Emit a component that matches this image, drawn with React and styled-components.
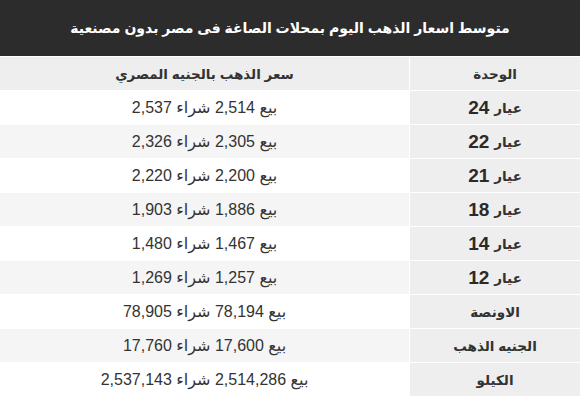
import React from "react";
import styled, { createGlobalStyle } from "styled-components";

const Global = createGlobalStyle`
  html, body { margin: 0; padding: 0; background: #ffffff; }
  body { font-family: "Liberation Sans", Arial, "DejaVu Sans", sans-serif; }
`;

const Page = styled.div`
  width: 580px;
  direction: rtl;
`;

const TitleBar = styled.div`
  height: 56px;
  background: #2c2c2c;
  color: #ffffff;
  display: flex;
  align-items: center;
  justify-content: center;
  font-weight: bold;
  font-size: 14px;
  border-bottom: 1px solid #ffffff;
`;

const Grid = styled.div`
  display: grid;
  grid-template-columns: 170px 1fr;
  grid-auto-rows: 33px;
  gap: 1px;
  background: #ffffff;
`;

const Cell = styled.div`
  display: flex;
  align-items: center;
  justify-content: center;
  color: #333333;
  background: ${(p) => p.$bg};
  font-size: ${(p) => (p.$bold ? "13.5px" : "16px")};
  font-weight: ${(p) => (p.$bold ? "bold" : "normal")};
  white-space: nowrap;
`;

const Num = styled.span`
  font-size: 19px;
  font-weight: bold;
  margin-right: 5px;
  color: #2a2a2a;
`;

const rows = [
  { k: "24", v: "بيع 2,514 شراء 2,537" },
  { k: "22", v: "بيع 2,305 شراء 2,326" },
  { k: "21", v: "بيع 2,200 شراء 2,220" },
  { k: "18", v: "بيع 1,886 شراء 1,903" },
  { k: "14", v: "بيع 1,467 شراء 1,480" },
  { k: "12", v: "بيع 1,257 شراء 1,269" },
  { label: "الاونصة", v: "بيع 78,194 شراء 78,905" },
  { label: "الجنيه الذهب", v: "بيع 17,600 شراء 17,760" },
  { label: "الكيلو", v: "بيع 2,514,286 شراء 2,537,143" },
];

export default function App() {
  return (
    <Page>
      <Global />
      <TitleBar>متوسط اسعار الذهب اليوم بمحلات الصاغة فى مصر بدون مصنعية</TitleBar>
      <Grid>
        <Cell $bold $bg="#eeeeee">الوحدة</Cell>
        <Cell $bold $bg="#eeeeee">سعر الذهب بالجنيه المصري</Cell>
        {rows.map((r, i) => (
          <React.Fragment key={i}>
            <Cell $bold $bg="#eeeeee">
              {r.label ? r.label : (<>عيار<Num>{r.k}</Num></>)}
            </Cell>
            <Cell $bg={i % 2 === 0 ? "#ffffff" : "#f5f5f5"}>{r.v}</Cell>
          </React.Fragment>
        ))}
      </Grid>
    </Page>
  );
}
